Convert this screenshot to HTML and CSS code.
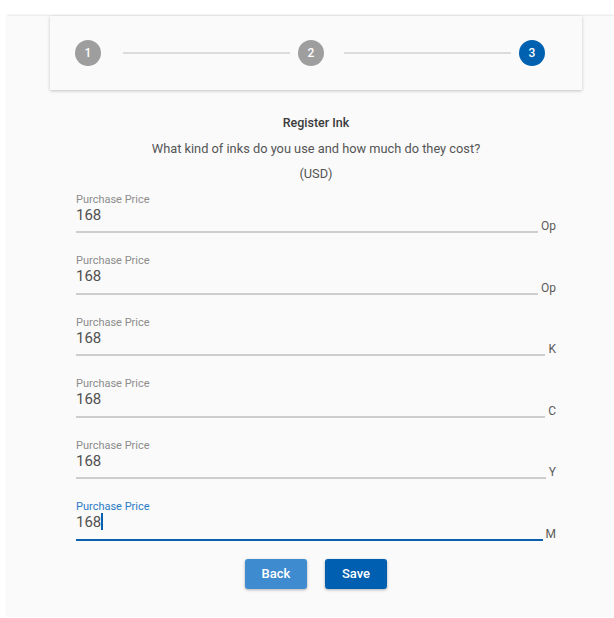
FILE: index.html
```html
<!DOCTYPE html>
<html lang="en">

<head>
    <meta charset="UTF-8">
    <meta name="viewport" content="width=device-width, initial-scale=1.0">
    <title>Register Ink</title>
    <link rel="stylesheet" href="styles.css">
</head>

<body>
    <div class="panel">
        <!-- Stepper -->
        <div class="stepper">
            <div class="step done">1</div>
            <div class="step-line first"></div>
            <div class="step done">2</div>
            <div class="step-line"></div>
            <div class="step active">3</div>
        </div>

        <div class="content">
            <div class="intro">
                <p class="title">Register Ink</p>
                <p>What kind of inks do you use and how much do they cost?</p>
                <p>(USD)</p>
            </div>

            <div class="field">
                <div class="field-box">
                    <label>Purchase Price</label>
                    <div class="value">168</div>
                </div>
                <span class="suffix">Op</span>
            </div>
            <div class="field">
                <div class="field-box">
                    <label>Purchase Price</label>
                    <div class="value">168</div>
                </div>
                <span class="suffix">Op</span>
            </div>
            <div class="field">
                <div class="field-box">
                    <label>Purchase Price</label>
                    <div class="value">168</div>
                </div>
                <span class="suffix">K</span>
            </div>
            <div class="field">
                <div class="field-box">
                    <label>Purchase Price</label>
                    <div class="value">168</div>
                </div>
                <span class="suffix">C</span>
            </div>
            <div class="field">
                <div class="field-box">
                    <label>Purchase Price</label>
                    <div class="value">168</div>
                </div>
                <span class="suffix">Y</span>
            </div>
            <div class="field focused">
                <div class="field-box">
                    <label>Purchase Price</label>
                    <div class="value">168<span class="caret"></span></div>
                </div>
                <span class="suffix">M</span>
            </div>

            <div class="actions">
                <button class="btn btn-back">Back</button>
                <button class="btn btn-save">Save</button>
            </div>
        </div>
    </div>
</body>

</html>
```

FILE: styles.css
```css
body {
    margin: 0;
    padding: 0;
    background-color: #fff;
    font-family: Roboto, 'Liberation Sans', sans-serif;
}

.panel {
    margin: 16px 0 0 7px;
    height: 601px;
    background-color: #fafafa;
    box-shadow: 0 -1px 2px rgba(0, 0, 0, 0.1);
}

/* Stepper */
.stepper {
    display: flex;
    align-items: center;
    margin: 0 32px 0 43px;
    height: 74px;
    padding: 0 37px 0 25px;
    background-color: #fafafa;
    box-shadow: 0 1px 3px rgba(0, 0, 0, 0.22);
}
.step {
    width: 26px;
    height: 26px;
    border-radius: 50%;
    flex-shrink: 0;
    display: flex;
    justify-content: center;
    align-items: center;
    color: #fff;
    font-size: 12px;
    font-weight: 500;
}
.step.done {
    background-color: #9e9e9e;
}
.step.active {
    background-color: #0061b0;
}
.step-line {
    flex: 1;
    height: 2px;
    background-color: #dcdcdc;
    margin: 0 8px 0 20px;
}
.step-line.first {
    margin-left: 22px;
}

/* Content */
.content {
    margin: 0 32px 0 43px;
    padding: 20px 26px 0;
}
.intro {
    text-align: center;
    margin-bottom: 6px;
}
.intro p {
    margin: 0;
    line-height: 25.5px;
    font-size: 12.8px;
    color: #555;
}
.intro .title {
    font-weight: 500;
    font-size: 12.5px;
    color: #3a3a3a;
}

.field {
    display: flex;
    align-items: flex-end;
    height: 40.5px;
    margin-bottom: 21px;
}
.field-box {
    flex: 1;
    border-bottom: 2px solid #cdcdcd;
    padding-bottom: 7.5px;
}
.field-box label {
    display: block;
    font-size: 11px;
    line-height: 13px;
    color: #8c8c8c;
}
.field-box .value {
    font-size: 15px;
    line-height: 18px;
    color: #505050;
}
.suffix {
    font-size: 12px;
    line-height: 16px;
    color: #5a5a5a;
    margin-left: 3px;
    margin-bottom: -1px;
}
.focused .field-box {
    border-bottom-color: #0a5fae;
}
.focused label {
    color: #2a7ac8;
}
.caret {
    display: inline-block;
    width: 2px;
    height: 17px;
    background-color: #0a5fae;
    vertical-align: -3px;
}

/* Buttons */
.actions {
    display: flex;
    justify-content: center;
    gap: 18px;
    margin-top: -3px;
}
.btn {
    height: 30px;
    border: none;
    border-radius: 3px;
    color: #fff;
    font-family: Roboto, 'Liberation Sans', sans-serif;
    font-size: 13px;
    font-weight: 500;
    box-shadow: 0 1px 3px rgba(0, 0, 0, 0.3);
}
.btn-back {
    width: 62px;
    background-color: #3f8bd0;
}
.btn-save {
    width: 62px;
    background-color: #005fb0;
}
```
